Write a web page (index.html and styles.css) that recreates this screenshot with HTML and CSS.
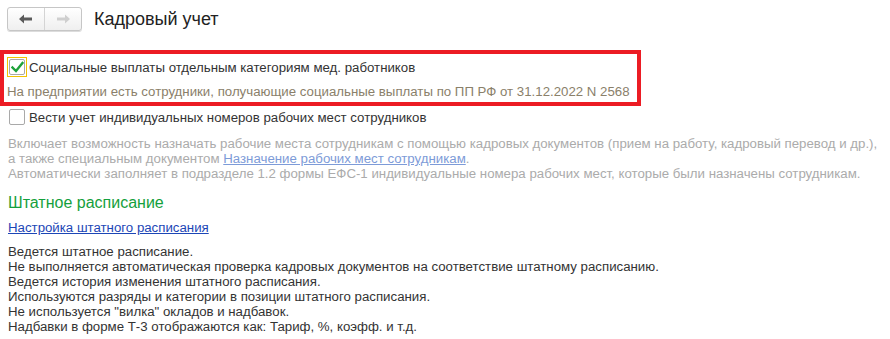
FILE: index.html
```html
<!DOCTYPE html>
<html lang="ru">
<head>
<meta charset="utf-8">
<title>Кадровый учет</title>
<link rel="stylesheet" href="styles.css">
</head>
<body>
<div class="page">
  <header class="header">
    <div class="nav">
      <button class="nav-btn nav-back" type="button" aria-label="Назад">
        <svg width="14" height="10" viewBox="0 0 14 10"><path d="M0 5 L5 0.5 L5 3.5 L13 3.5 L13 6.5 L5 6.5 L5 9.5 Z" fill="#5a5a5a"/></svg>
      </button>
      <button class="nav-btn nav-fwd" type="button" aria-label="Вперед">
        <svg width="14" height="10" viewBox="0 0 14 10"><path d="M14 5 L9 0.5 L9 3.5 L1 3.5 L1 6.5 L9 6.5 L9 9.5 Z" fill="#cfcfcf"/></svg>
      </button>
    </div>
    <h1 class="title">Кадровый учет</h1>
  </header>

  <div class="highlight">
    <div class="check-row">
      <span class="focus"><span class="box checked">
        <svg width="13" height="13" viewBox="0 0 13 13"><path d="M1.5 6.5 L5 10 L11.5 2" fill="none" stroke="#1fa23a" stroke-width="2.4" stroke-linecap="square"/></svg>
      </span></span>
      <span class="label">Социальные выплаты отдельным категориям мед. работников</span>
    </div>
    <div class="hint">На предприятии есть сотрудники, получающие социальные выплаты по ПП РФ от 31.12.2022 N 2568</div>
  </div>

  <div class="check-row plain">
    <span class="focus nofocus"><span class="box"></span></span>
    <span class="label">Вести учет индивидуальных номеров рабочих мест сотрудников</span>
  </div>

  <div class="desc">
    <div>Включает возможность назначать рабочие места сотрудникам с помощью кадровых документов (прием на работу, кадровый перевод и др.),</div>
    <div>а также специальным документом <a class="desc-link" href="#">Назначение рабочих мест сотрудникам</a>.</div>
    <div>Автоматически заполняет в подразделе 1.2 формы ЕФС-1 индивидуальные номера рабочих мест, которые были назначены сотрудникам.</div>
  </div>

  <h2 class="section">Штатное расписание</h2>
  <a class="link" href="#">Настройка штатного расписания</a>

  <div class="info">
    <div>Ведется штатное расписание.</div>
    <div>Не выполняется автоматическая проверка кадровых документов на соответствие штатному расписанию.</div>
    <div>Ведется история изменения штатного расписания.</div>
    <div>Используются разряды и категории в позиции штатного расписания.</div>
    <div>Не используется "вилка" окладов и надбавок.</div>
    <div>Надбавки в форме Т-3 отображаются как: Тариф, %, коэфф. и т.д.</div>
  </div>
</div>
</body>
</html>
```

FILE: styles.css
```css
* { box-sizing: border-box; }
html, body { margin: 0; padding: 0; background: #fff; }
body {
  font-family: Arial, "Liberation Sans", sans-serif;
  font-size: 13.25px;
  color: #333;
  width: 890px;
  height: 339px;
  overflow: hidden;
}
.page { padding: 7px 0 0 0; }

.header { display: flex; align-items: center; padding-left: 7px; height: 24px; }
.nav {
  display: flex;
  height: 24px;
  border: 1px solid #c6c6c6;
  border-radius: 3px;
  background: linear-gradient(#ffffff, #efefef);
  box-shadow: 0 1px 0 #dcdcdc;
}
.nav-btn {
  width: 36px;
  height: 22px;
  border: 0;
  padding: 0;
  margin: 0;
  background: transparent;
  display: flex;
  align-items: center;
  justify-content: center;
}
.nav-back { border-right: 1px solid #d4d4d4; width: 37px; }
.title {
  margin: 0 0 0 12px;
  font-weight: normal;
  font-size: 18px;
  color: #222;
  line-height: 24px;
}

.highlight {
  margin-top: 19px;
  width: 641px;
  border: 4px solid #ec1c24;
  padding: 3px 0 2px 3px;
}
.check-row { display: flex; align-items: center; height: 20px; }
.focus {
  width: 20px; height: 20px;
  border: 1px solid #f2c200;
  display: flex; align-items: center; justify-content: center;
  margin-left: 0;
}
.focus.nofocus { border-color: transparent; }
.box {
  width: 16px; height: 16px;
  border: 1px solid #a9a9a9;
  border-radius: 2px;
  background: #fff;
  display: flex; align-items: center; justify-content: center;
}
.label { margin-left: 2px; color: #333; }
.hint { margin-top: 7px; line-height: 16px; color: #8a806a; white-space: nowrap; }

.check-row.plain { margin-top: 1px; padding-left: 7px; }

.desc { margin-top: 9px; padding-left: 8px; color: #ababab; line-height: 15px; white-space: nowrap; }
.desc-link { color: #7d9bd8; text-decoration: underline; }

.section {
  margin: 12px 0 0 0;
  padding-left: 8px;
  font-size: 16px;
  font-weight: normal;
  line-height: 20px;
  color: #14a03c;
}
.link {
  display: inline-block;
  margin: 7px 0 0 8px;
  line-height: 15px;
  color: #1c46b6;
  text-decoration: underline;
}
.info { margin-top: 9px; padding-left: 8px; line-height: 15px; color: #333; white-space: nowrap; }
```
